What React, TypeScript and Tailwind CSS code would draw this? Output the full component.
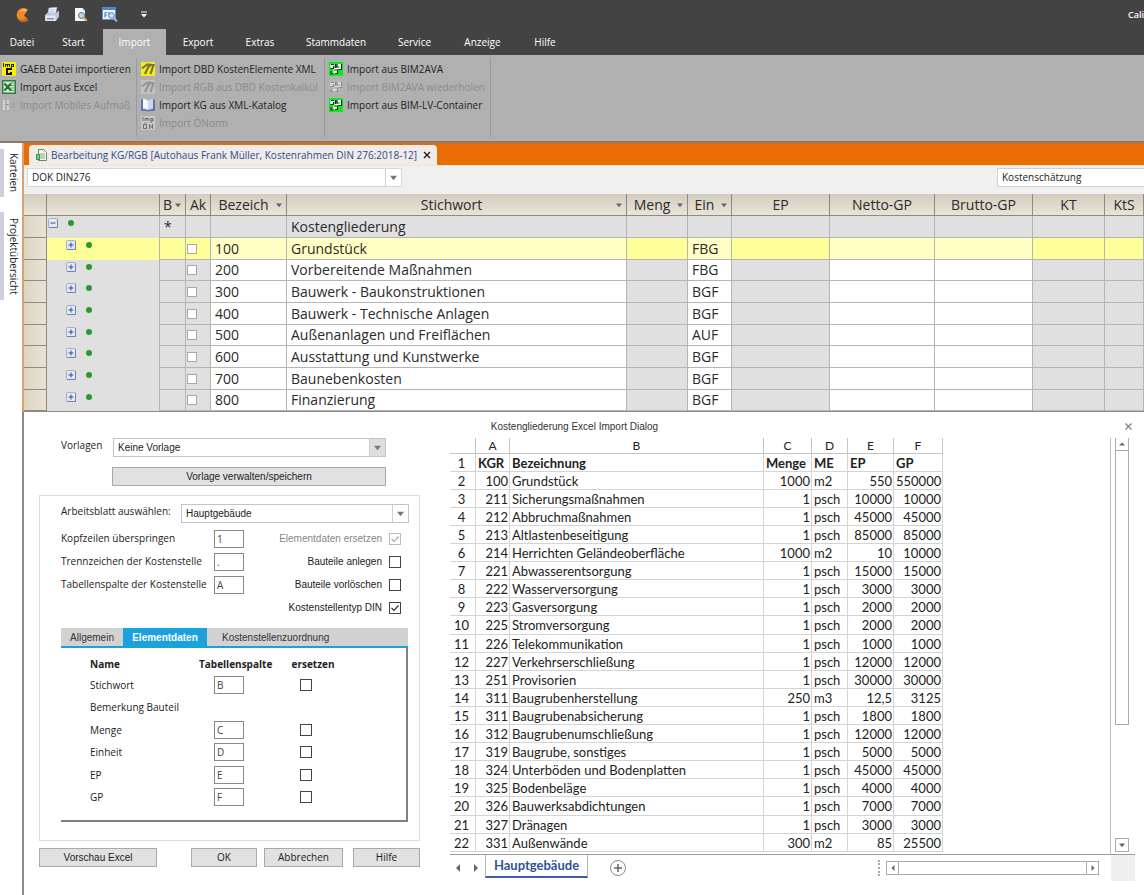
import type { ReactNode } from "react";

/* ---------- icons ---------- */

function LogoIcon() {
  return (
    <svg width="14" height="16" viewBox="0 0 14 16">
      <path d="M12 2.5A7 7 0 1 0 12.5 13L8 8.5Z" fill="#f08a24" />
      <path d="M11 3A6 6 0 0 0 3 5.5C5 3.5 8 3.5 10 4.500Z" fill="#ffc078" />
      <path d="M2 11A6.500 6.500 0 0 0 12 12.800L10.500 11.500C8 13.500 4.500 13.500 2 11Z" fill="#c25e0a" />
    </svg>
  );
}

function PrinterIcon() {
  return (
    <svg width="16" height="16" viewBox="0 0 16 16">
      <path d="M5 1l8-.8-1.500 7L3.500 8Z" fill="#f5f8fc" stroke="#a9b6c6" strokeWidth=".6" />
      <path d="M1 8l3-2.500h8.500L15 3.500v6L12 14H1.500Z" fill="#b9c8db" />
      <path d="M1 8.500h10.500v5.500H1.500Z" fill="#dfe8f2" />
      <path d="M3 11h7v1.500H3Z" fill="#7f92ab" />
      <path d="M6 2.800l5-.4M5.600 4.600l5-.4" stroke="#9fb2cc" strokeWidth=".7" />
    </svg>
  );
}

function PreviewIcon() {
  return (
    <svg width="14" height="16" viewBox="0 0 14 16">
      <path d="M1 1h7.500l2.500 2.500V14H1Z" fill="#f7f9fb" />
      <path d="M8.500 1v2.500H11Z" fill="#bcc7d4" />
      <circle cx="7.500" cy="8.500" r="3" fill="#bcd3ea" stroke="#5d6b7c" />
      <path d="M9.800 10.800l3 3" stroke="#e0a54e" strokeWidth="2" />
    </svg>
  );
}

function WindowSearchIcon() {
  return (
    <svg width="16" height="16" viewBox="0 0 16 16">
      <path d="M.5.500h13v12H.5Z" fill="#f2f7fd" stroke="#5b8fcf" />
      <path d="M.5.500h13v2.500H.5Z" fill="#4b86d0" />
      <path d="M3 5.500v5M3 5.500h2.500M3 8h2M7 5v5" stroke="#4b86d0" strokeWidth="1.200" />
      <circle cx="9.500" cy="8.500" r="2.800" fill="#cfe1f5" stroke="#5b7ea8" />
      <path d="M11.500 10.800l3.500 3.700" stroke="#9fb4cd" strokeWidth="2" />
    </svg>
  );
}

function GaebIcon() {
  return (
    <svg width="14" height="14" viewBox="0 0 14 14" shapeRendering="crispEdges">
      <path d="M0 0h14v14H0Z" fill="#f7f300" />
      <path d="M1 1h1v4h-1zM3 2h1v3h-1zM5 2h1v3h-1zM7 2h1v3h-1zM4 2h3v1h-3zM9 2h1v5h-1zM9 2h3v1h-3zM11 2h1v3h-1zM9 4h3v1h-3z" fill="#222" />
      <path d="M4 6h6v2H6v3h2v-1h2v3H4Z" fill="#111" />
    </svg>
  );
}

function ExcelIcon() {
  return (
    <svg width="14" height="14" viewBox="0 0 14 14">
      <path d="M0 0h14v14H0Z" fill="#2d7d3f" />
      <path d="M1.500 1.500h11v11h-11Z" fill="#d9ecdc" />
      <path d="M8.500 3h4M8.500 5.500h4M8.500 8h4M8.500 10.500h4" stroke="#5aa36a" />
      <path d="M2.500 3.500l6.500 7M9 3.500l-6.500 7" stroke="#1f7434" strokeWidth="2.200" />
    </svg>
  );
}

function MobileIcon() {
  return (
    <svg width="14" height="14" viewBox="0 0 14 14">
      <path d="M1 2h2v10H1ZM5 2h2v4H5ZM5 8h2v4H5Z" fill="#d2d2d2" />
      <path d="M3 6.500h3M9 6h4M9 9h4" stroke="#989898" />
    </svg>
  );
}

function DbdIcon({ muted = false }: { muted?: boolean }) {
  return (
    <svg width="14" height="14" viewBox="0 0 14 14">
      <path d="M0 0h14v14H0Z" fill={muted ? "#c2c2c2" : "#f4ee1c"} />
      <path
        d="M1 6.500L6 2.500h2.500L4 12M7 5.500L9.500 3h3L9.500 12"
        fill="none"
        stroke={muted ? "#949494" : "#7a7430"}
        strokeWidth="2.200"
      />
    </svg>
  );
}

function BookIcon() {
  return (
    <svg width="14" height="14" viewBox="0 0 14 14">
      <path d="M0 2l2-1v10l5 1 5-1V1l2 1v11H8l-1 1-1-1H0Z" fill="#5d75a8" />
      <path d="M2 1c2 0 4 .5 5 2v9c-1-1-3-1.500-5-1.500Z" fill="#f4f7fc" />
      <path d="M12 1c-2 0-4 .5-5 2v9c1-1 3-1.500 5-1.500Z" fill="#cbd8ec" />
    </svg>
  );
}

function NormIcon() {
  return (
    <svg width="14" height="14" viewBox="0 0 14 14">
      <path d="M0 0h14v14H0Z" fill="#c8c8c8" />
      <path d="M2 1v4M4 5V2.500h4V5M6 2.500V5M10 7V2.500h2V5h-2" fill="none" stroke="#6c6c6c" />
      <path d="M2.500 8.500h3v4h-3ZM8.500 13V8.500l3 4V8M3 7h.8M5 7h.8" fill="none" stroke="#6c6c6c" />
    </svg>
  );
}

function BimIcon({ muted = false }: { muted?: boolean }) {
  const ink = muted ? "#8f8f8f" : "#16331a";
  return (
    <svg width="14" height="14" viewBox="0 0 14 14">
      <path d="M0 0h14v14H0Z" fill={muted ? "#b4b4b4" : "#0fe827"} />
      <path d="M1.500 2h4v4h-4ZM8 2h4.500v5H8ZM4.500 6h4v5.500h-4Z" fill={muted ? "#dcdcdc" : "#fff"} />
      <path
        d="M2 2.500h3M1.500 6.500h3V4M6.500 2v4M8 2v3h2.500M12.500 2v5.500H9.500M5 8h3.500v3.500H6M2 9v3h2.500"
        fill="none"
        stroke={ink}
        strokeWidth="1.200"
      />
    </svg>
  );
}

function SheetIcon() {
  return (
    <svg width="11" height="12" viewBox="0 0 11 12">
      <path d="M2.500.5h5l3 3v8h-8Z" fill="#f4faf2" stroke="#5d8f5a" />
      <path d="M4 5h5M4 7h5M4 9h5" stroke="#79a876" />
      <path d="M0 5h4v6H0Z" fill="#3c9a44" />
      <path d="M1 7h2M1 9h2" stroke="#fff" strokeWidth=".8" />
    </svg>
  );
}

type Direction = "up" | "down" | "left" | "right";

const ARROWS: Record<Direction, string> = {
  up: "M0 6L4 2l4 4Z",
  down: "M0 2h8L4 7Z",
  left: "M6 0v8L2 4Z",
  right: "M2 0v8l4-4Z",
};

function Arrow({ dir = "down", size = 6, color = "#666" }: { dir?: Direction; size?: number; color?: string }) {
  return (
    <svg width={size} height={size} viewBox="0 0 8 8" className="shrink-0">
      <path d={ARROWS[dir]} fill={color} />
    </svg>
  );
}

function TreeToggle({ open = false }: { open?: boolean }) {
  return (
    <svg width="10" height="10" viewBox="0 0 10 10">
      <rect x=".5" y=".5" width="9" height="9" rx="1" fill="#e3e8f5" stroke="#a3adc8" />
      <path d="M1 9.500h8.500V1" fill="none" stroke="#7381ad" />
      <path d={open ? "M2.500 5h5" : "M2.500 5h5M5 2.500v5"} stroke="#33508f" />
    </svg>
  );
}

/* ---------- title bar and ribbon ---------- */

const MENU = [
  { label: "Datei", width: "w-[44px]" },
  { label: "Start", width: "w-[59px]" },
  { label: "Import", width: "w-[63px]" },
  { label: "Export", width: "w-[64px]" },
  { label: "Extras", width: "w-[60px]" },
  { label: "Stammdaten", width: "w-[92px]" },
  { label: "Service", width: "w-[65px]" },
  { label: "Anzeige", width: "w-[71px]" },
  { label: "Hilfe", width: "w-[54px]" },
];

function TitleBar() {
  return (
    <header className="bg-[#434343] text-white">
      <div className="flex h-[29px] items-center pl-4">
        <div className="flex flex-1 items-center gap-[14px]">
          <LogoIcon />
          <PrinterIcon />
          <PreviewIcon />
          <WindowSearchIcon />
          <svg width="8" height="8" viewBox="0 0 8 8" className="ml-2">
            <path d="M1 1h6" stroke="#fff" />
            <path d="M1 3h6L4 6.500Z" fill="#fff" />
          </svg>
        </div>
        <span className="text-[9px] font-semibold">Cali</span>
      </div>
      <nav className="flex h-[26px]">
        {MENU.map((m) => (
          <button
            key={m.label}
            className={`${m.width} text-[10px] font-medium ${m.label === "Import" ? "bg-[#b0b0b0]" : ""}`}
          >
            {m.label}
          </button>
        ))}
      </nav>
    </header>
  );
}

function RibbonItem({ icon, label, disabled }: { icon: ReactNode; label: string; disabled?: boolean }) {
  return (
    <button
      disabled={disabled}
      className="flex h-[18px] items-center gap-1 whitespace-nowrap text-[10px] font-medium text-[#222] disabled:text-[#8b8b8b]"
    >
      {icon}
      {label}
    </button>
  );
}

function Ribbon() {
  return (
    <div className="flex h-[86px] bg-[#b0b0b0] pt-[3px] pb-1">
      <div className="w-[137px] border-r border-[#9a9a9a] pt-[2px] pl-[2px]">
        <RibbonItem icon={<GaebIcon />} label="GAEB Datei importieren" />
        <RibbonItem icon={<ExcelIcon />} label="Import aus Excel" />
        <RibbonItem icon={<MobileIcon />} label="Import Mobiles Aufmaß" disabled />
      </div>
      <div className="w-[188px] border-r border-[#9a9a9a] pt-[2px] pl-1">
        <RibbonItem icon={<DbdIcon />} label="Import DBD KostenElemente XML" />
        <RibbonItem icon={<DbdIcon muted />} label="Import RGB aus DBD Kostenkalkül" disabled />
        <RibbonItem icon={<BookIcon />} label="Import KG aus XML-Katalog" />
        <RibbonItem icon={<NormIcon />} label="Import ÖNorm" disabled />
      </div>
      <div className="w-[166px] border-r border-[#9a9a9a] pt-[2px] pl-1">
        <RibbonItem icon={<BimIcon />} label="Import aus BIM2AVA" />
        <RibbonItem icon={<BimIcon muted />} label="Import BIM2AVA wiederholen" disabled />
        <RibbonItem icon={<BimIcon />} label="Import aus BIM-LV-Container" />
      </div>
    </div>
  );
}

/* ---------- cost breakdown grid ---------- */

const COLUMNS = [
  { label: "", width: "w-[23px]" },
  { label: "", width: "w-[113px]" },
  { label: "B", width: "w-[26px]", arrow: true },
  { label: "Ak", width: "w-[25px]" },
  { label: "Bezeich", width: "w-[76px]", arrow: true },
  { label: "Stichwort", width: "", arrow: true },
  { label: "Meng", width: "w-[61px]", arrow: true },
  { label: "Ein", width: "w-[44px]", arrow: true },
  { label: "EP", width: "w-[98px]" },
  { label: "Netto-GP", width: "w-[105px]" },
  { label: "Brutto-GP", width: "w-[98px]" },
  { label: "KT", width: "w-[72px]" },
  { label: "KtS", width: "w-[39px]" },
];

const GROUPS = [
  ["", "Kostengliederung", ""],
  ["100", "Grundstück", "FBG"],
  ["200", "Vorbereitende Maßnahmen", "FBG"],
  ["300", "Bauwerk - Baukonstruktionen", "BGF"],
  ["400", "Bauwerk - Technische Anlagen", "BGF"],
  ["500", "Außenanlagen und Freiflächen", "AUF"],
  ["600", "Ausstattung und Kunstwerke", "BGF"],
  ["700", "Baunebenkosten", "BGF"],
  ["800", "Finanzierung", "BGF"],
];

function CostGrid() {
  return (
    <table className="w-full table-fixed border-separate border-spacing-0 text-[14px] leading-4 text-[#2b2b2b]">
      <thead>
        <tr className="h-[22px]">
          {COLUMNS.map((c, i) => (
            <th
              key={i}
              className={`${c.width} border-r border-b border-r-[#8f8b83] border-b-[#8f8b83] bg-linear-to-b from-[#d3cdc0] to-[#e9e4d8] p-0 font-normal`}
            >
              <div className="flex items-center">
                <span className="flex-1 text-center">{c.label}</span>
                {c.arrow && (
                  <span className="pr-1">
                    <Arrow />
                  </span>
                )}
              </div>
            </th>
          ))}
        </tr>
      </thead>
      <tbody>
        {GROUPS.map(([code, name, unit], i) => {
          const root = i === 0;
          const selected = i === 1;
          const locked = selected ? "bg-[#ffff99]" : "bg-[#e0e0e0]";
          const open = root ? "bg-[#e0e0e0]" : selected ? "bg-[#ffffc6]" : "bg-white";
          const line = "border-r border-b border-r-[#b5b5b5] border-b-[#b5b5b5] p-0";
          return (
            <tr key={name} className={i % 3 === 2 ? "h-[21px]" : "h-[22px]"}>
              <td className="border-r border-b border-[#8f8b83] bg-linear-to-r from-[#ddd5c3] to-[#eae4d6] p-0" />
              <td className={`${locked} border-r border-r-[#b5b5b5] p-0 align-top`}>
                <div className={`flex items-center gap-[10px] pt-[2px] ${root ? "pl-px" : "pl-[19px]"}`}>
                  <TreeToggle open={root} />
                  <span className="size-[6px] rounded-full bg-[#2a9a2e]" />
                </div>
              </td>
              <td className={`${locked} ${line}`}>{root && <span className="pl-1">*</span>}</td>
              <td className={`${locked} ${line}`}>
                {!root && (
                  <input
                    type="checkbox"
                    aria-label={`Aktiv ${code}`}
                    className="ml-px block size-[10px] appearance-none border border-[#a8a8a8] bg-white"
                  />
                )}
              </td>
              <td className={`${open} ${line} pl-1`}>{code}</td>
              <td className={`${open} ${line} pl-1`}>{name}</td>
              <td className={`${locked} ${line}`} />
              <td className={`${open} ${line} pl-1`}>{unit}</td>
              <td className={`${locked} ${line}`} />
              <td className={`${open} ${line}`} />
              <td className={`${open} ${line}`} />
              <td className={`${locked} ${line}`} />
              <td className={`${locked} ${line}`} />
            </tr>
          );
        })}
      </tbody>
    </table>
  );
}

function EditorPane() {
  return (
    <section className="border-b border-l-2 border-b-[#8a8a8a] border-l-[#d9a273] bg-[#f0f0f0]">
      <div className="flex h-[22px] items-end bg-[#ea6c05] pl-[5px]">
        <div className="flex h-[20px] items-center gap-1 rounded-t-sm bg-[#f0ece9] pr-1 pl-[7px] text-[10px] font-medium text-[#2d4a8c]">
          <SheetIcon />
          <span>Bearbeitung KG/RGB [Autohaus Frank Müller, Kostenrahmen DIN 276:2018-12]</span>
          <button aria-label="Schließen" className="px-[2px] text-[#222]">
            <svg width="8" height="8" viewBox="0 0 8 8">
              <path d="M1 1l6 6M7 1l-6 6" stroke="currentColor" strokeWidth="1.400" />
            </svg>
          </button>
        </div>
      </div>
      <div className="flex h-[29px] items-start justify-between border-t border-[#fbe3cf] pt-[2px] pl-[3px]">
        <ComboBox label="Katalog" value="DOK DIN276" className="w-[375px] border-[#d8d8d8] font-medium" />
        <select
          aria-label="Kostenart"
          className="h-[19px] w-[147px] appearance-none border border-r-0 border-[#d0d0d0] bg-white pl-1 text-[10px] font-medium text-[#222]"
        >
          <option>Kostenschätzung</option>
        </select>
      </div>
      <CostGrid />
    </section>
  );
}

function SideTabs() {
  return (
    <aside className="flex w-[22px] shrink-0 flex-col gap-[15px] bg-white pt-[6px] text-[10px] font-medium text-[#222]">
      <button className="flex h-[48px] items-center justify-start border-l-4 border-[#cfcfe0] pl-[2px]">
        <span className="[writing-mode:vertical-rl]">Karteien</span>
      </button>
      <button className="flex h-[88px] items-center justify-start border-l-4 border-[#cfcfe0] pl-[2px]">
        <span className="[writing-mode:vertical-rl]">Projektübersicht</span>
      </button>
    </aside>
  );
}

/* ---------- import form ---------- */

function ComboBox({
  id,
  label,
  value,
  className,
  shaded,
}: {
  id?: string;
  label?: string;
  value: string;
  className: string;
  shaded?: boolean;
}) {
  return (
    <div className={`relative h-[19px] border bg-white text-[10px] text-[#222] ${className}`}>
      <select id={id} aria-label={label} className="block size-full appearance-none pl-1">
        <option>{value}</option>
      </select>
      <span
        className={`pointer-events-none absolute inset-y-0 right-0 flex w-4 items-center justify-center border-l border-[#d0d0d0] ${shaded ? "bg-[#dedede]" : ""}`}
      >
        <Arrow size={7} color="#777" />
      </span>
    </div>
  );
}

function TextBox({ id, value, label }: { id?: string; value: string; label?: string }) {
  return (
    <input
      id={id}
      aria-label={label}
      defaultValue={value}
      className="h-[18px] w-[30px] border border-[#8a8a8a] bg-white pl-[2px] text-[10px] text-[#444]"
    />
  );
}

function CheckBox({ id, label, checked, disabled }: { id?: string; label?: string; checked?: boolean; disabled?: boolean }) {
  return (
    <span className="relative block size-[12px]">
      <input
        id={id}
        type="checkbox"
        aria-label={label}
        defaultChecked={checked}
        disabled={disabled}
        className="peer block size-[12px] appearance-none border border-[#444] bg-white disabled:border-[#bbb]"
      />
      <svg
        viewBox="0 0 12 12"
        className="pointer-events-none absolute inset-0 hidden text-[#333] peer-checked:block peer-disabled:text-[#aaa]"
      >
        <path d="M2.500 6l2.500 2.500 4.500-5" fill="none" stroke="currentColor" strokeWidth="1.200" />
      </svg>
    </span>
  );
}

const SETTINGS = [
  { id: "skip", label: "Kopfzeilen überspringen", value: "1" },
  { id: "separator", label: "Trennzeichen der Kostenstelle", value: "." },
  { id: "column", label: "Tabellenspalte der Kostenstelle", value: "A" },
];

const OPTIONS = [
  { id: "replace", label: "Elementdaten ersetzen", checked: true, disabled: true },
  { id: "create", label: "Bauteile anlegen" },
  { id: "clear", label: "Bauteile vorlöschen" },
  { id: "din", label: "Kostenstellentyp DIN", checked: true },
];

const FIELDS = [
  ["Stichwort", "B"],
  ["Bemerkung Bauteil", ""],
  ["Menge", "C"],
  ["Einheit", "D"],
  ["EP", "E"],
  ["GP", "F"],
];

const FORM_BUTTON = "h-[19px] border border-[#a9a9a9] bg-[#e1e1e1] text-[10px] text-[#222]";

function ElementTabs() {
  return (
    <div className="mt-[9px] mr-[11px] ml-[21px]">
      <div role="tablist" className="flex h-[20px] border-b-2 border-[#1ba1dc] bg-[#d2d2d2] font-['Liberation_Sans'] text-[10px] text-[#333]">
        <button role="tab" className="w-[62px]">Allgemein</button>
        <button role="tab" aria-selected className="w-[84px] bg-[#1ba1dc] font-bold text-white">
          Elementdaten
        </button>
        <button role="tab" className="px-[15px]">Kostenstellenzuordnung</button>
      </div>
      <div className="h-[174px] border-r-2 border-b-2 border-[#808080] pt-[6px]">
        <table className="table-fixed text-[10px] leading-[14px] font-medium text-[#222]">
          <thead>
            <tr className="h-[19px] font-bold">
              <th className="w-[138px] p-0 pl-[29px] text-left">Name</th>
              <th className="w-[82px] p-0 text-left">Tabellenspalte</th>
              <th className="w-[64px] p-0 text-center">ersetzen</th>
            </tr>
          </thead>
          <tbody>
            {FIELDS.map(([name, column], i) => (
              <tr key={name} className={i % 2 === 0 ? "h-[23px]" : "h-[22px]"}>
                <td className="p-0 pl-[29px]">{name}</td>
                <td className="p-0 pl-[15px]">
                  <div className="flex">{column && <TextBox label={name} value={column} />}</div>
                </td>
                <td className="p-0 pl-[19px]">{column && <CheckBox label={`${name} ersetzen`} />}</td>
              </tr>
            ))}
          </tbody>
        </table>
      </div>
    </div>
  );
}

function ImportForm() {
  return (
    <form className="w-[396px] shrink-0 pl-[15px] text-[10px] font-medium text-[#222]">
      <div className="flex pl-[22px]">
        <label htmlFor="template" className="w-[52px] leading-[14px]">
          Vorlagen
        </label>
        <ComboBox
          id="template"
          value="Keine Vorlage"
          shaded
          className="w-[273px] border-[#c4c4c4] font-['Liberation_Sans'] font-normal"
        />
      </div>
      <div className="mt-[10px] pl-[73px]">
        <button type="button" className={`${FORM_BUTTON} w-[274px] font-['Liberation_Sans']`}>
          Vorlage verwalten/speichern
        </button>
      </div>
      <div className="mt-[9px] h-[346px] border border-[#dcdcdc] pt-2">
        <div className="flex pl-[21px]">
          <label htmlFor="worksheet" className="w-[120px] leading-[14px]">
            Arbeitsblatt auswählen:
          </label>
          <ComboBox
            id="worksheet"
            value="Hauptgebäude"
            className="w-[228px] border-[#c4c4c4] font-['Liberation_Sans'] font-normal"
          />
        </div>
        <div className="mt-[4px] flex justify-between pr-[18px] pl-[21px]">
          <div>
            {SETTINGS.map((s) => (
              <div key={s.id} className="flex h-[23px] items-center">
                <label htmlFor={s.id} className="w-[153px]">
                  {s.label}
                </label>
                <TextBox id={s.id} value={s.value} />
              </div>
            ))}
          </div>
          <div>
            {OPTIONS.map((o) => (
              <div
                key={o.id}
                className={`flex h-[23px] items-center justify-end gap-[7px] font-['Liberation_Sans'] font-normal ${o.disabled ? "text-[#888]" : ""}`}
              >
                <label htmlFor={o.id}>{o.label}</label>
                <CheckBox id={o.id} checked={o.checked} disabled={o.disabled} />
              </div>
            ))}
          </div>
        </div>
        <ElementTabs />
      </div>
      <div className="mt-[7px] flex">
        <button type="button" className={`${FORM_BUTTON} mr-[34px] w-[118px] font-['Liberation_Sans']`}>
          Vorschau Excel
        </button>
        <button type="button" className={`${FORM_BUTTON} mr-[7px] w-[66px]`}>OK</button>
        <button type="button" className={`${FORM_BUTTON} mr-[10px] w-[79px]`}>Abbrechen</button>
        <button type="button" className={`${FORM_BUTTON} w-[67px]`}>Hilfe</button>
      </div>
    </form>
  );
}

/* ---------- spreadsheet preview ---------- */

const SHEET = [
  ["KGR", "Bezeichnung", "Menge", "ME", "EP", "GP"],
  ["100", "Grundstück", "1000", "m2", "550", "550000"],
  ["211", "Sicherungsmaßnahmen", "1", "psch", "10000", "10000"],
  ["212", "Abbruchmaßnahmen", "1", "psch", "45000", "45000"],
  ["213", "Altlastenbeseitigung", "1", "psch", "85000", "85000"],
  ["214", "Herrichten Geländeoberfläche", "1000", "m2", "10", "10000"],
  ["221", "Abwasserentsorgung", "1", "psch", "15000", "15000"],
  ["222", "Wasserversorgung", "1", "psch", "3000", "3000"],
  ["223", "Gasversorgung", "1", "psch", "2000", "2000"],
  ["225", "Stromversorgung", "1", "psch", "2000", "2000"],
  ["226", "Telekommunikation", "1", "psch", "1000", "1000"],
  ["227", "Verkehrserschließung", "1", "psch", "12000", "12000"],
  ["251", "Provisorien", "1", "psch", "30000", "30000"],
  ["311", "Baugrubenherstellung", "250", "m3", "12,5", "3125"],
  ["311", "Baugrubenabsicherung", "1", "psch", "1800", "1800"],
  ["312", "Baugrubenumschließung", "1", "psch", "12000", "12000"],
  ["319", "Baugrube, sonstiges", "1", "psch", "5000", "5000"],
  ["324", "Unterböden und Bodenplatten", "1", "psch", "45000", "45000"],
  ["325", "Bodenbeläge", "1", "psch", "4000", "4000"],
  ["326", "Bauwerksabdichtungen", "1", "psch", "7000", "7000"],
  ["327", "Dränagen", "1", "psch", "3000", "3000"],
  ["331", "Außenwände", "300", "m2", "85", "25500"],
];

const SHEET_COLUMNS = [
  { label: "A", width: "w-[34px]", text: false },
  { label: "B", width: "w-[254px]", text: true },
  { label: "C", width: "w-[48px]", text: false },
  { label: "D", width: "w-[36px]", text: true },
  { label: "E", width: "w-[46px]", text: false },
  { label: "F", width: "w-[49px]", text: false },
];

function SheetTable() {
  return (
    <table className="w-[493px] table-fixed border-separate border-spacing-0 font-['Lato'] text-[13px] leading-4 text-[#222]">
      <thead>
        <tr className="h-[16px]">
          <th className="w-[26px] border-r border-b border-[#c4c4c4] p-0" />
          {SHEET_COLUMNS.map((c) => (
            <th
              key={c.label}
              className={`${c.width} border-r border-b border-[#c4c4c4] p-0 text-[12px] leading-[14px] font-normal`}
            >
              {c.label}
            </th>
          ))}
        </tr>
      </thead>
      <tbody>
        {SHEET.map((row, r) => (
          <tr key={r} className={r % 10 === 9 ? "h-[19px]" : "h-[18px]"}>
            <td className="border-r border-b border-[#d4d4d4] p-0 pr-[2px] text-center">{r + 1}</td>
            {row.map((cell, c) => (
              <td
                key={c}
                className={`border-r border-b border-[#d4d4d4] p-0 pr-px pl-[2px] whitespace-nowrap ${
                  r === 0 ? "font-bold" : SHEET_COLUMNS[c].text ? "" : "text-right"
                }`}
              >
                {cell}
              </td>
            ))}
          </tr>
        ))}
      </tbody>
    </table>
  );
}

function SheetPreview() {
  return (
    <div className="flex min-w-0 flex-1 flex-col pr-[9px] pl-[30px]">
      <div className="flex border-b border-[#9c9c9c]">
        <div className="flex-1 border-r border-[#bdbdbd] pb-[2px]">
          <SheetTable />
        </div>
        <div className="flex w-[24px] flex-col justify-between pb-[2px] pl-1">
          <div className="flex h-[287px] w-[14px] flex-col border border-t-0 border-[#ababab]">
            <button aria-label="Nach oben" className="flex h-[13px] items-center justify-center border-b border-[#ababab]">
              <Arrow dir="up" />
            </button>
          </div>
          <button aria-label="Nach unten" className="flex size-[14px] items-center justify-center border border-[#ababab]">
            <Arrow />
          </button>
        </div>
      </div>
      <div className="flex h-[26px]">
        <div className="flex w-[35px] items-center gap-[10px] pl-[4px]">
          <Arrow dir="left" size={8} />
          <Arrow dir="right" size={8} />
        </div>
        <button className="h-[23px] w-[103px] border-x border-b-2 border-x-[#b5b5b5] border-b-[#3f5ba9] font-['Lato'] text-[13px] font-bold text-[#2f5496]">
          Hauptgebäude
        </button>
        <button aria-label="Neues Blatt" className="ml-[22px]">
          <svg width="16" height="16" viewBox="0 0 16 16">
            <circle cx="8" cy="8" r="7.500" fill="none" stroke="#8a8a8a" />
            <path d="M4 8h8M8 4v8" stroke="#666" strokeWidth="1.500" />
          </svg>
        </button>
        <div className="flex flex-1 items-center justify-end pr-[12px]">
          <span className="mr-[6px] h-[16px] border-l-2 border-dotted border-[#a8a8a8]" />
          <div className="flex h-[14px] w-[213px] justify-between border border-[#ababab]">
            <button aria-label="Nach links" className="flex w-[12px] items-center justify-center border-r border-[#ababab]">
              <Arrow dir="left" />
            </button>
            <button aria-label="Nach rechts" className="flex w-[12px] items-center justify-center border-l border-[#ababab]">
              <Arrow dir="right" />
            </button>
          </div>
        </div>
        <div className="w-[24px] bg-[#efefef]" />
      </div>
    </div>
  );
}

function ImportDialog() {
  return (
    <section className="flex-1 border-l-2 border-[#8a8a8a] bg-white">
      <div className="flex h-[26px] items-center pt-[2px] pr-[12px]">
        <h2 className="flex-1 text-center font-['Liberation_Sans'] text-[10px] text-[#333]">
          Kostengliederung Excel Import Dialog
        </h2>
        <button aria-label="Dialog schließen" className="text-[#888]">
          <svg width="7" height="7" viewBox="0 0 7 7">
            <path d="M.5.5l6 6M6.500.5l-6 6" stroke="currentColor" strokeWidth="1.400" />
          </svg>
        </button>
      </div>
      <div className="flex">
        <ImportForm />
        <SheetPreview />
      </div>
    </section>
  );
}

export default function App() {
  return (
    <div className="flex min-h-screen flex-col overflow-hidden bg-white font-['Open_Sans',sans-serif]">
      <TitleBar />
      <Ribbon />
      <div className="flex flex-1 border-t-2 border-[#8b7a70]">
        <SideTabs />
        <main className="flex min-w-0 flex-1 flex-col">
          <EditorPane />
          <ImportDialog />
        </main>
      </div>
    </div>
  );
}
